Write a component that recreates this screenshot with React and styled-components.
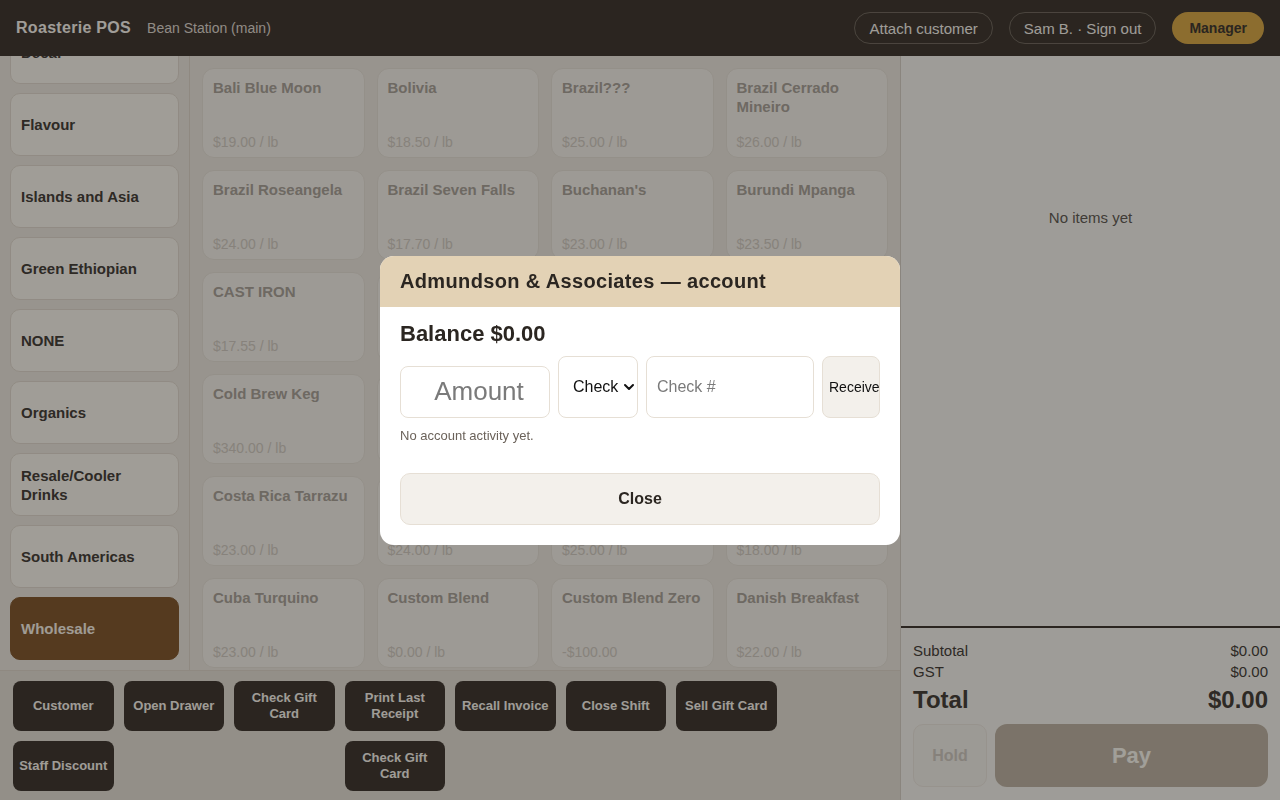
import React, { useEffect, useRef } from 'react';
import styled, { createGlobalStyle } from 'styled-components';
import { ChevronDown } from 'lucide-react';

const GlobalStyle = createGlobalStyle`
  html, body { margin: 0; padding: 0; height: 100%; }
  body {
    font-family: "Liberation Sans", Arial, Helvetica, sans-serif;
    background: #f1ebe1;
    overflow: hidden;
  }
  #root { height: 100%; }
  * { box-sizing: border-box; }
`;

const Shell = styled.div`
  display: flex;
  flex-direction: column;
  width: 100vw;
  height: 100vh;
`;

const TopBar = styled.header`
  height: 56px;
  flex: none;
  display: flex;
  align-items: center;
  gap: 16px;
  padding: 0 16px;
  background: #443c34;
`;

const Brand = styled.div`
  font-size: 16px;
  font-weight: 700;
  letter-spacing: 0.3px;
  color: #fef9f1;
`;

const Location = styled.div`
  font-size: 14px;
  color: #e3ddd3;
`;

const TopActions = styled.div`
  margin-left: auto;
  display: flex;
  align-items: center;
  gap: 16px;
`;

const PillButton = styled.button`
  height: 32px;
  padding: 0 ${(p) => (p.$accent ? 16 : 14)}px;
  border-radius: 16px;
  font-family: inherit;
  font-size: ${(p) => (p.$accent ? 14 : 15)}px;
  font-weight: ${(p) => (p.$accent ? 700 : 400)};
  border: 1px solid ${(p) => (p.$accent ? 'transparent' : '#776d62')};
  background: ${(p) => (p.$accent ? '#dead4b' : 'transparent')};
  color: ${(p) => (p.$accent ? '#443c34' : '#fdf8f0')};
  cursor: pointer;
`;

const Body = styled.div`
  flex: 1;
  display: flex;
  min-height: 0;
`;

const LeftColumn = styled.div`
  flex: 1;
  display: flex;
  flex-direction: column;
  min-width: 0;
`;

const Workspace = styled.div`
  flex: 1;
  display: flex;
  min-height: 0;
`;

const Sidebar = styled.nav`
  width: 190px;
  flex: none;
  border-right: 1px solid #e2d9cc;
  overflow-y: auto;
  scrollbar-width: none;
  padding: 10px;
  display: flex;
  flex-direction: column;
  gap: 9px;
`;

const CategoryButton = styled.button`
  flex: none;
  height: 63px;
  width: 100%;
  display: flex;
  align-items: center;
  text-align: left;
  padding: 0 10px;
  border-radius: 10px;
  border: 1px solid ${(p) => (p.$active ? '#875c31' : '#e6ddd1')};
  background: ${(p) => (p.$active ? '#875c31' : '#fef9f0')};
  color: ${(p) => (p.$active ? '#fdf6ea' : '#49433b')};
  font-family: inherit;
  font-size: 15px;
  font-weight: 700;
  line-height: 19px;
  cursor: pointer;
`;

const ProductGrid = styled.div`
  flex: 1;
  min-width: 0;
  overflow-y: auto;
  scrollbar-width: none;
  padding: 12px;
  display: grid;
  grid-template-columns: repeat(4, 1fr);
  grid-auto-rows: 90px;
  gap: 12px;
  align-content: start;
`;

const ProductCard = styled.button`
  display: flex;
  flex-direction: column;
  justify-content: space-between;
  align-items: flex-start;
  text-align: left;
  padding: 9px 10px 7px;
  border-radius: 12px;
  border: 1px solid #ebe4da;
  background: #f9f4ec;
  font-family: inherit;
  cursor: pointer;
`;

const ProductName = styled.span`
  font-size: 15px;
  font-weight: 700;
  line-height: 19px;
  color: #aea69c;
`;

const ProductPrice = styled.span`
  font-size: 14px;
  line-height: 16px;
  color: #d6cfc4;
`;

const ActionBar = styled.div`
  flex: none;
  display: grid;
  grid-template-columns: repeat(8, 1fr);
  grid-auto-rows: 50px;
  gap: 10px;
  padding: 10px 13px 9px;
  border-top: 1px solid #e2d9cc;
  background: #e9e2d7;
`;

const ActionButton = styled.button`
  grid-column: ${(p) => p.$col};
  display: flex;
  align-items: center;
  justify-content: center;
  padding: 0 5px;
  border: none;
  border-radius: 8px;
  background: #443c34;
  color: #fdf8ef;
  font-family: inherit;
  font-size: 13px;
  font-weight: 700;
  line-height: 16px;
  text-align: center;
  cursor: pointer;
`;

const CartPanel = styled.aside`
  width: 380px;
  flex: none;
  display: flex;
  flex-direction: column;
  border-left: 1px solid #dbd3c8;
  background: #fbf8f1;
`;

const CartItems = styled.div`
  flex: 1;
  padding-top: 153px;
  text-align: center;
  font-size: 15px;
  line-height: 17px;
  color: #665f57;
`;

const Totals = styled.div`
  flex: none;
  border-top: 2px solid #443c34;
  padding: 12px 12px 13px;
`;

const TotalRow = styled.div`
  display: flex;
  justify-content: space-between;
  align-items: center;
  font-size: ${(p) => (p.$grand ? 24 : 15)}px;
  font-weight: ${(p) => (p.$grand ? 700 : 400)};
  line-height: ${(p) => (p.$grand ? 28 : 21)}px;
  margin-top: ${(p) => (p.$grand ? 4 : 0)}px;
  color: #49433b;
`;

const CheckoutRow = styled.div`
  display: flex;
  gap: 8px;
  margin-top: 10px;
`;

const HoldButton = styled.button`
  width: 74px;
  height: 63px;
  border-radius: 10px;
  border: 1px solid #efe9e0;
  background: #f8f4ed;
  color: #d4cdc3;
  font-family: inherit;
  font-size: 16px;
  font-weight: 700;
`;

const PayButton = styled.button`
  flex: 1;
  height: 63px;
  border-radius: 12px;
  border: none;
  background: #c3b7a7;
  color: #fffcf3;
  font-family: inherit;
  font-size: 22px;
  font-weight: 700;
`;

const Backdrop = styled.div`
  position: fixed;
  inset: 0;
  background: rgba(0, 0, 0, 0.37);
  display: flex;
  align-items: center;
  justify-content: center;
`;

const Modal = styled.div`
  width: 520px;
  background: #ffffff;
  border-radius: 14px;
  overflow: hidden;
`;

const ModalHeader = styled.div`
  height: 51px;
  display: flex;
  align-items: center;
  padding: 0 20px;
  background: #e3d2b5;
  color: #2b2621;
  font-size: 20px;
  font-weight: 700;
  letter-spacing: 0.35px;
`;

const ModalBody = styled.div`
  padding: 14px 20px 20px;
`;

const Balance = styled.div`
  font-size: 22px;
  font-weight: 700;
  line-height: 25px;
  color: #2b2621;
`;

const PaymentRow = styled.div`
  margin-top: 10px;
  display: flex;
  align-items: flex-end;
  gap: 8px;
`;

const Field = styled.input`
  height: ${(p) => (p.$big ? 52 : 62)}px;
  width: ${(p) => (p.$big ? '150px' : 'auto')};
  flex: ${(p) => (p.$big ? 'none' : 1)};
  min-width: 0;
  border: 1px solid #e6dfd5;
  border-radius: 8px;
  background: #fff;
  padding: ${(p) => (p.$big ? '0 4px 0 12px' : '0 10px')};
  font-family: inherit;
  font-size: ${(p) => (p.$big ? 26 : 16)}px;
  text-align: ${(p) => (p.$big ? 'center' : 'left')};
  color: #2b2621;
  outline: none;
  &::placeholder { color: #7a7a7a; }
`;

const SelectWrap = styled.div`
  position: relative;
  width: 80px;
  flex: none;
`;

const Select = styled.select`
  appearance: none;
  width: 100%;
  height: 62px;
  border: 1px solid #e6dfd5;
  border-radius: 8px;
  background: #fff;
  padding: 0 18px 0 14px;
  font-family: inherit;
  font-size: 16px;
  color: #111;
  outline: none;
`;

const Chevron = styled(ChevronDown)`
  position: absolute;
  right: 1px;
  top: 23px;
  pointer-events: none;
  color: #111;
`;

const ReceiveButton = styled.button`
  width: 58px;
  height: 62px;
  flex: none;
  border: 1px solid #e6dfd5;
  border-radius: 8px;
  background: #f3f0eb;
  padding: 0 6px;
  overflow: hidden;
  white-space: nowrap;
  text-align: left;
  font-family: inherit;
  font-size: 14px;
  color: #111;
`;

const ActivityNote = styled.div`
  margin-top: 10px;
  font-size: 13px;
  line-height: 15px;
  color: #6b625a;
`;

const CloseButton = styled.button`
  margin-top: 30px;
  width: 100%;
  height: 52px;
  border: 1px solid #e6dfd5;
  border-radius: 10px;
  background: #f3f0eb;
  color: #2b2621;
  font-family: inherit;
  font-size: 16px;
  font-weight: 700;
`;

const categories = [
  'All Coffee',
  'Blends',
  'Decaf',
  'Flavour',
  'Islands and Asia',
  'Green Ethiopian',
  'NONE',
  'Organics',
  'Resale/Cooler Drinks',
  'South Americas',
  'Wholesale',
];

const products = [
  ['Bali Blue Moon', '$19.00 / lb'],
  ['Bolivia', '$18.50 / lb'],
  ['Brazil???', '$25.00 / lb'],
  ['Brazil Cerrado Mineiro', '$26.00 / lb'],
  ['Brazil Roseangela', '$24.00 / lb'],
  ['Brazil Seven Falls', '$17.70 / lb'],
  ["Buchanan's", '$23.00 / lb'],
  ['Burundi Mpanga', '$23.50 / lb'],
  ['CAST IRON', '$17.55 / lb'],
  ['Christmas Blend', '$21.00 / lb'],
  ['Coffee Filters', '$6.50 / lb'],
  ['Colombia Excelso', '$19.50 / lb'],
  ['Cold Brew Keg', '$340.00 / lb'],
  ['Colombia Huila', '$20.00 / lb'],
  ['Colombia Supremo', '$19.00 / lb'],
  ['Congo Kivu', '$22.50 / lb'],
  ['Costa Rica Tarrazu', '$23.00 / lb'],
  ['Costa Rica Decaf', '$24.00 / lb'],
  ['Crema Espresso', '$25.00 / lb'],
  ['Cream Sugar', '$18.00 / lb'],
  ['Cuba Turquino', '$23.00 / lb'],
  ['Custom Blend', '$0.00 / lb'],
  ['Custom Blend Zero', '-$100.00'],
  ['Danish Breakfast', '$22.00 / lb'],
  ['Decaf Colombia', '$21.00 / lb'],
  ['Decaf Mexico', '$21.50 / lb'],
  ['Dominican Republic', '$22.00 / lb'],
  ['Ecuador Loja', '$24.00 / lb'],
];

const actions = [
  ['Customer', 1],
  ['Open Drawer', 2],
  ['Check Gift Card', 3],
  ['Print Last Receipt', 4],
  ['Recall Invoice', 5],
  ['Close Shift', 6],
  ['Sell Gift Card', 7],
  ['Staff Discount', 1],
  ['Check Gift Card', 4],
];

export default function App() {
  const sidebarRef = useRef(null);

  useEffect(() => {
    const el = sidebarRef.current;
    if (el) el.scrollTop = el.scrollHeight;
  }, []);

  return (
    <>
      <GlobalStyle />
      <Shell>
        <TopBar>
          <Brand>Roasterie POS</Brand>
          <Location>Bean Station (main)</Location>
          <TopActions>
            <PillButton>Attach customer</PillButton>
            <PillButton>Sam B. · Sign out</PillButton>
            <PillButton $accent>Manager</PillButton>
          </TopActions>
        </TopBar>
        <Body>
          <LeftColumn>
            <Workspace>
              <Sidebar ref={sidebarRef}>
                {categories.map((c) => (
                  <CategoryButton key={c} $active={c === 'Wholesale'}>
                    {c}
                  </CategoryButton>
                ))}
              </Sidebar>
              <ProductGrid>
                {products.map(([name, price]) => (
                  <ProductCard key={name}>
                    <ProductName>{name}</ProductName>
                    <ProductPrice>{price}</ProductPrice>
                  </ProductCard>
                ))}
              </ProductGrid>
            </Workspace>
            <ActionBar>
              {actions.map(([label, col], i) => (
                <ActionButton key={i} $col={col}>
                  {label}
                </ActionButton>
              ))}
            </ActionBar>
          </LeftColumn>
          <CartPanel>
            <CartItems>No items yet</CartItems>
            <Totals>
              <TotalRow>
                <span>Subtotal</span>
                <span>$0.00</span>
              </TotalRow>
              <TotalRow>
                <span>GST</span>
                <span>$0.00</span>
              </TotalRow>
              <TotalRow $grand>
                <span>Total</span>
                <span>$0.00</span>
              </TotalRow>
              <CheckoutRow>
                <HoldButton disabled>Hold</HoldButton>
                <PayButton disabled>Pay</PayButton>
              </CheckoutRow>
            </Totals>
          </CartPanel>
        </Body>
      </Shell>
      <Backdrop>
        <Modal role="dialog">
          <ModalHeader>Admundson &amp; Associates — account</ModalHeader>
          <ModalBody>
            <Balance>Balance $0.00</Balance>
            <PaymentRow>
              <Field $big placeholder="Amount" />
              <SelectWrap>
                <Select defaultValue="check">
                  <option value="check">Check</option>
                  <option value="cash">Cash</option>
                  <option value="card">Card</option>
                </Select>
                <Chevron size={16} strokeWidth={3} />
              </SelectWrap>
              <Field placeholder="Check #" />
              <ReceiveButton>Receive</ReceiveButton>
            </PaymentRow>
            <ActivityNote>No account activity yet.</ActivityNote>
            <CloseButton>Close</CloseButton>
          </ModalBody>
        </Modal>
      </Backdrop>
    </>
  );
}
